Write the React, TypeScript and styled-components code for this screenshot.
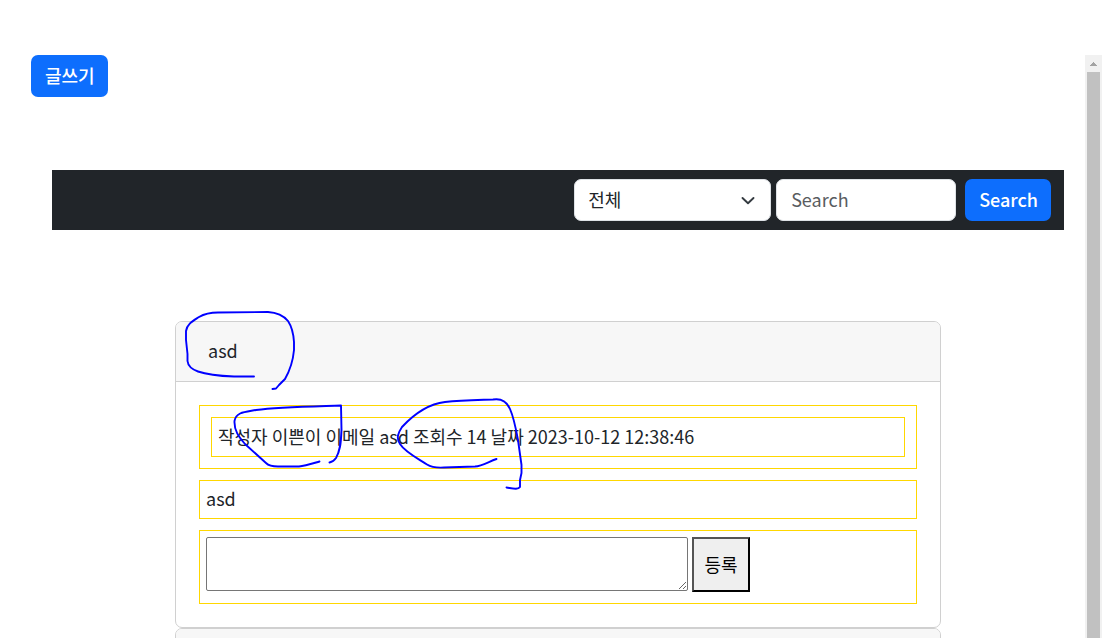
import React from "react";
import styled, { createGlobalStyle, css } from "styled-components";

const GlobalStyle = createGlobalStyle`
  *, *::before, *::after { box-sizing: border-box; }
  body {
    margin: 0;
    background: #fff;
    color: #212529;
    font-family: "Noto Sans CJK KR", "Noto Sans", sans-serif;
    font-size: 18px;
    line-height: 26px;
  }
  button, input, select, textarea { font: inherit; }
`;

const Page = styled.div`
  position: relative;
  display: flex;
  height: 100vh;
  padding: 55px 11px 0 0;
  overflow: hidden;
`;

const Content = styled.main`
  flex: 1;
  min-width: 0;
  padding: 0 21px 0 31px;
`;

const PrimaryButton = styled.button`
  height: 42px;
  padding: 0 13px 2px 14px;
  border: 0;
  border-radius: 7px;
  background: #0d6efd;
  color: #fff;
  font-weight: 500;
  cursor: pointer;
`;

const Board = styled.div`
  margin-left: 21px;
`;

const SearchBar = styled.form`
  display: flex;
  justify-content: flex-end;
  gap: 5px;
  margin-top: 73px;
  padding: 9px 13px;
  background: #212529;
`;

const control = css`
  height: 42px;
  padding: 0 14px 2px;
  border: 1px solid #dee2e6;
  border-radius: 7px;
  background: #fff;
  color: #212529;
`;

const SelectWrap = styled.div`
  position: relative;
  width: 197px;
`;

const CategorySelect = styled.select`
  ${control}
  display: block;
  width: 100%;
  padding: 0 40px 2px 13px;
  appearance: none;
`;

const Chevron = styled.svg`
  position: absolute;
  top: 12px;
  right: 14px;
  pointer-events: none;
`;

const SearchInput = styled.input`
  ${control}
  width: 180px;
  margin-right: 4px;
  &::placeholder { color: #595c5f; opacity: 1; }
`;

const CardList = styled.div`
  margin: 91px 123px 0;
`;

const Card = styled.article`
  border: 1px solid #d0d0d0;
  border-radius: 7px;
  overflow: hidden;
`;

const CardHeader = styled.header`
  min-height: 60px;
  padding: 15px 32px 18px;
  border-bottom: 1px solid #d0d0d0;
  background: #f7f7f7;
`;

const CardBody = styled.div`
  display: flex;
  flex-direction: column;
  gap: 11px;
  padding: 23px;
`;

const Box = styled.div<{ $inset?: boolean }>`
  padding: ${(p) => (p.$inset ? "11px" : "4px 6px 7px")};
  border: 1px solid #ffd700;
`;

const MetaLine = styled.div`
  padding: 5px 6px 7px;
  border: 1px solid #ffd700;
`;

const ReplyForm = styled.form`
  display: flex;
  gap: 4px;
  padding: 6px 6px 11px;
  border: 1px solid #ffd700;
`;

const ReplyText = styled.textarea`
  width: 482px;
  height: 54px;
  border: 1px solid #767676;
  border-radius: 2px;
`;

const ReplyButton = styled.button`
  width: 58px;
  height: 55px;
  padding: 0 0 2px;
  border: 2px outset #000;
  background: #efefef;
  color: #000;
`;

const ScrollTrack = styled.div`
  display: flex;
  flex-direction: column;
  width: 17px;
  background: #f1f1f1;
`;

const ScrollUp = styled.svg`
  flex: none;
`;

const ScrollThumb = styled.div`
  flex: 1;
  margin: 0 2px;
  background: #c1c1c1;
`;

const PenMarks = styled.svg`
  position: absolute;
  top: 0;
  left: 0;
  pointer-events: none;
`;

export default function App() {
  return (
    <>
      <GlobalStyle />
      <Page>
        <Content>
          <PrimaryButton type="button">글쓰기</PrimaryButton>
          <Board>
            <SearchBar onSubmit={(e) => e.preventDefault()}>
              <SelectWrap>
                <CategorySelect aria-label="검색 구분">
                  <option>전체</option>
                </CategorySelect>
                <Chevron width="18" height="18" viewBox="0 0 18 18" fill="none" aria-hidden="true">
                  <path d="M3.500 7 9 12.200 14.500 7" stroke="#343a40" strokeWidth="1.900" strokeLinecap="round" strokeLinejoin="round" />
                </Chevron>
              </SelectWrap>
              <SearchInput type="search" placeholder="Search" aria-label="Search" />
              <PrimaryButton type="submit">Search</PrimaryButton>
            </SearchBar>
            <CardList>
              <Card>
                <CardHeader>asd</CardHeader>
                <CardBody>
                  <Box $inset>
                    <MetaLine>작성자 이쁜이 이메일 asd 조회수 14 날짜 2023-10-12 12:38:46</MetaLine>
                  </Box>
                  <Box>asd</Box>
                  <ReplyForm onSubmit={(e) => e.preventDefault()}>
                    <ReplyText aria-label="댓글" />
                    <ReplyButton type="submit">등록</ReplyButton>
                  </ReplyForm>
                </CardBody>
              </Card>
              <Card>
                <CardHeader />
              </Card>
            </CardList>
          </Board>
        </Content>
        <ScrollTrack aria-hidden="true">
          <ScrollUp width="17" height="17" viewBox="0 0 17 17">
            <path d="M8 7h1v1h1v1h1v1h1v1H5v-1h1V9h1V8h1z" fill="#a3a3a3" />
          </ScrollUp>
          <ScrollThumb />
        </ScrollTrack>
        <PenMarks width="560" height="520" viewBox="0 0 560 520" fill="none" stroke="#0000ff" strokeWidth="1.9" strokeLinecap="round" strokeLinejoin="round" aria-hidden="true">
          <path d="M254 376.500H234C221 376 208 375 198 371.500C191 369 188 366 187.500 361L187.500 354L186 340V331C187 324 193 321 199 317C205 313.500 210 312.500 218 312.500L268 312C276 312.500 283 315 288 321C292 327 293.500 334 294 342V350C293 361 289 372 285 379L279 385L276 388.500L272.500 389" />
          <path d="M319.500 461.500C311 464 305 466 299 466.500H278C272 466.500 269 466 266 463L245 444C239 437 234 431 234.500 421C236 412 245 412 256 410C278 407 310 406.500 341 405.500L341.500 430C341 444 340 451 336 458C334 461 332 462 329.500 462.500" />
          <path d="M496.500 459C488 462 482 466 475 466.500L444 467.500C436 468 431 467 427 464.500C417 458 405 452 400 444C396 438 398 433 402 427C415 413 428 404 445 402C461 400 476 400 493 399.500C502 398 507 402 510 409C514 418 516 429 518 440L521.500 465V473L520 480V487C518 490 513 488.500 506.500 487.500" />
        </PenMarks>
      </Page>
    </>
  );
}
